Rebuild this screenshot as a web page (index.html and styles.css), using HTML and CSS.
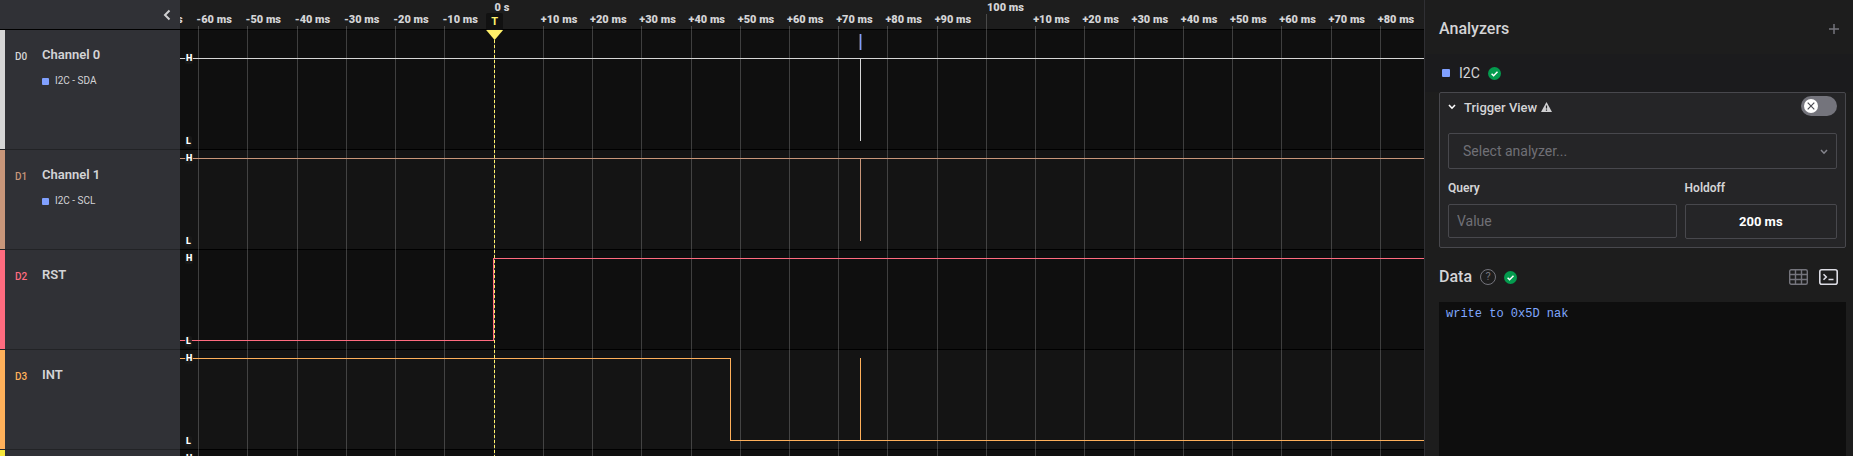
FILE: index.html
```html
<!DOCTYPE html>
<html lang="en">
<head>
<meta charset="utf-8">
<title>Logic Analyzer</title>
<link rel="stylesheet" href="styles.css">
</head>
<body>
<div class="app">
  <aside class="channels">
    <header class="channels-head">
      <button class="icon-btn" type="button" aria-label="Collapse channels">
        <svg width="8" height="12" viewBox="0 0 8 12"><path d="M6.500 1.500 2 6l4.500 4.500" fill="none" stroke="currentColor" stroke-width="2"/></svg>
      </button>
    </header>
    <section class="channel tall white">
      <span class="channel-id">D0</span>
      <div><h2>Channel 0</h2><p class="tag"><i class="swatch"></i>I2C - SDA</p></div>
    </section>
    <section class="channel tan">
      <span class="channel-id">D1</span>
      <div><h2>Channel 1</h2><p class="tag"><i class="swatch"></i>I2C - SCL</p></div>
    </section>
    <section class="channel red">
      <span class="channel-id">D2</span>
      <div><h2>RST</h2></div>
    </section>
    <section class="channel orange">
      <span class="channel-id">D3</span>
      <div><h2>INT</h2></div>
    </section>
    <section class="channel yellow"></section>
  </aside>

  <main class="plot">
    <div class="ruler-bg"></div>
    <div class="lane tall"></div>
    <div class="lane"></div>
    <div class="lane"></div>
    <div class="lane"></div>
    <div class="lane"></div>
    <ol class="timeline">
      <li>-70 ms</li><li>-60 ms</li><li>-50 ms</li><li>-40 ms</li><li>-30 ms</li><li>-20 ms</li><li>-10 ms</li>
      <li class="major">0 s</li>
      <li>+10 ms</li><li>+20 ms</li><li>+30 ms</li><li>+40 ms</li><li>+50 ms</li><li>+60 ms</li><li>+70 ms</li><li>+80 ms</li><li>+90 ms</li>
      <li class="major">100 ms</li>
      <li>+10 ms</li><li>+20 ms</li><li>+30 ms</li><li>+40 ms</li><li>+50 ms</li><li>+60 ms</li><li>+70 ms</li><li>+80 ms</li>
    </ol>
    <div class="waves">
      <div class="wave tall white">
        <svg class="trace"><line x1="0" y1="28.500" x2="100%" y2="28.500"/><line x1="54.700%" y1="28" x2="54.700%" y2="111"/><line class="frame" x1="54.700%" y1="4" x2="54.700%" y2="20"/><line class="frame-core" x1="54.700%" y1="4" x2="54.700%" y2="20"/></svg>
        <b class="level">H</b><b class="level">L</b>
      </div>
      <div class="wave tan">
        <svg class="trace"><line x1="0" y1="8.500" x2="100%" y2="8.500"/><line x1="54.700%" y1="8" x2="54.700%" y2="91"/></svg>
        <b class="level">H</b><b class="level">L</b>
      </div>
      <div class="wave red">
        <svg class="trace"><line x1="0" y1="90.500" x2="25.200%" y2="90.500"/><line x1="25.200%" y1="8" x2="25.200%" y2="91"/><line x1="25.200%" y1="8.500" x2="100%" y2="8.500"/></svg>
        <b class="level">H</b><b class="level">L</b>
      </div>
      <div class="wave orange">
        <svg class="trace"><line x1="0" y1="8.500" x2="44.250%" y2="8.500"/><line x1="44.250%" y1="8" x2="44.250%" y2="91"/><line x1="44.250%" y1="90.500" x2="100%" y2="90.500"/><line x1="54.700%" y1="8" x2="54.700%" y2="91"/></svg>
        <b class="level">H</b><b class="level">L</b>
      </div>
      <div class="wave yellow">
        <b class="level">H</b>
      </div>
    </div>
    <div class="trigger"><b>T</b><i class="arrow"></i></div>
  </main>

  <aside class="panel">
    <header class="panel-head">
      <h1>Analyzers</h1>
      <button class="icon-btn dim" type="button" aria-label="Add analyzer">
        <svg width="10" height="10" viewBox="0 0 10 10"><path d="M5 0v10M0 5h10" stroke="currentColor" stroke-width="1.500"/></svg>
      </button>
    </header>
    <div class="analyzer">
      <i class="swatch"></i><span>I2C</span>
      <svg width="13" height="13" viewBox="0 0 13 13"><circle cx="6.500" cy="6.500" r="6.500" fill="#049b4e"/><path d="M3.600 6.700 5.600 8.700 9.500 4.700" fill="none" stroke="#fff" stroke-width="1.500"/></svg>
    </div>
    <section class="card">
      <header class="card-head">
        <button class="icon-btn fold" type="button" aria-label="Collapse Trigger View">
          <svg width="8" height="6" viewBox="0 0 8 6"><path d="M1 1l3 3.200L7 1" fill="none" stroke="currentColor" stroke-width="1.600"/></svg>
        </button>
        <h3>Trigger View</h3>
        <svg class="warn" width="11" height="10" viewBox="0 0 11 10"><path d="M5.500 0 11 10H0Z" fill="#cfcfd1"/><path d="M5.500 3.400v3.200M5.500 7.500v1.200" stroke="#252527" stroke-width="1.200"/></svg>
        <label class="toggle">
          <input type="checkbox" aria-label="Enable Trigger View">
          <svg width="14" height="14" viewBox="0 0 14 14"><circle cx="7" cy="7" r="7" fill="#fff"/><path d="M3.700 3.700l6.600 6.600M10.300 3.700l-6.600 6.600" stroke="#4c4c54" stroke-width="1.200"/></svg>
        </label>
      </header>
      <div class="select-box">
        <select aria-label="Analyzer"><option>Select analyzer...</option></select>
        <svg width="8" height="6" viewBox="0 0 8 6"><path d="M1 1l3 3.200L7 1" fill="none" stroke="currentColor" stroke-width="1.500"/></svg>
      </div>
      <div class="fields">
        <div class="field"><label for="query">Query</label><input id="query" type="text" placeholder="Value"></div>
        <div class="field"><label for="holdoff">Holdoff</label><input id="holdoff" class="holdoff" type="text" value="200 ms"></div>
      </div>
    </section>
    <header class="data-head">
      <h1>Data</h1>
      <button class="help" type="button" aria-label="Help">?</button>
      <svg width="13" height="13" viewBox="0 0 13 13"><circle cx="6.500" cy="6.500" r="6.500" fill="#049b4e"/><path d="M3.600 6.700 5.600 8.700 9.500 4.700" fill="none" stroke="#fff" stroke-width="1.500"/></svg>
      <div class="views">
        <button class="icon-btn dim" type="button" aria-label="Table view">
          <svg width="19" height="16" viewBox="0 0 19 16" fill="none" stroke="currentColor" stroke-width="1.400"><rect x=".7" y=".7" width="17.600" height="14.600" rx="1.500"/><path d="M6.500 1v14M12.500 1v14M1 5.500h17M1 10.500h17"/></svg>
        </button>
        <button class="icon-btn bright" type="button" aria-label="Terminal view">
          <svg width="19" height="16" viewBox="0 0 19 16" fill="none" stroke="currentColor" stroke-width="1.600"><rect x=".8" y=".8" width="17.400" height="14.400" rx="2"/><path d="M4.500 5.200 7.300 8l-2.800 2.800M9.500 10.500h5"/></svg>
        </button>
      </div>
    </header>
    <pre class="terminal">write to 0x5D nak</pre>
  </aside>
</div>
</body>
</html>
```
FILE: styles.css
```css
* { box-sizing: border-box; margin: 0; padding: 0; }

body {
  background: #1d1d1d;
  color: #d4d4d6;
  font-family: Roboto, sans-serif;
  overflow: hidden;
}

.app { display: flex; height: 100vh; overflow: hidden; }

button { font: inherit; cursor: pointer; }
.icon-btn { display: flex; background: none; border: 0; color: #cfcfd1; }
.dim { color: #74747c; }
.bright { color: #dcdce4; }

.white { --c: #d6d6d6; }
.tan { --c: #c8967a; }
.red { --c: #ff6b7f; }
.orange { --c: #ffb05a; }
.yellow { --c: #f7e83c; }

/* Channel list */
.channels { flex: 0 0 180px; background: #303136; }
.channels-head {
  display: flex;
  justify-content: flex-end;
  align-items: center;
  height: 30px;
  padding: 0 9px;
  border-bottom: 1px solid #000;
}
.channel {
  display: flex;
  height: 100px;
  padding: 16px 10px 0;
  border-bottom: 1px solid #222326;
  background: linear-gradient(var(--c), var(--c)) no-repeat left / 5px 100%;
}
.channel.tall, .wave.tall, .lane.tall { height: 120px; }
.channel-id {
  width: 32px;
  padding: 4px 0 0 5px;
  color: var(--c);
  font-size: 10px;
  font-weight: 500;
  line-height: 14px;
}
.channel h2 { font-size: 13px; font-weight: 600; line-height: 18px; }
.tag {
  display: flex;
  align-items: center;
  gap: 6px;
  margin-top: 10px;
  font-size: 10px;
  line-height: 14px;
}
.swatch { width: 7px; height: 7px; border-radius: 1px; background: #80a0ff; }

/* Waveform area */
.plot { position: relative; flex: 1; min-width: 0; overflow: hidden; }
.ruler-bg { height: 30px; background: #1d1d1d; border-bottom: 1px solid #000; }
.lane { height: 100px; background: #141414; border-bottom: 1px solid #000; }
.lane:nth-child(even) { background: #0f0f0f; }

.timeline {
  position: absolute;
  inset: 0 -5px 0 -31px;
  display: grid;
  grid-template-columns: repeat(26, 1fr);
  list-style: none;
  white-space: nowrap;
  font-size: 11px;
  font-weight: 900;
  line-height: 14px;
}
.timeline li {
  padding-top: 13px;
  text-indent: -2px;
  background: linear-gradient(#fff3, #fff3) no-repeat 0 26px / 1px 100%;
}
.timeline .major {
  padding-top: 1px;
  text-indent: 1px;
  background-position: 0 14px;
}

.waves { position: absolute; inset: 30px 0 0; }
.wave {
  position: relative;
  display: flex;
  flex-direction: column;
  justify-content: space-between;
  align-items: flex-start;
  height: 100px;
  padding: 3px 5px;
}
.wave.tall { padding-top: 23px; }
.trace {
  position: absolute;
  inset: 0;
  width: 100%;
  height: 100%;
  stroke: var(--c);
  shape-rendering: crispEdges;
}
.frame { stroke: #4a4a58; stroke-width: 3px; }
.frame-core { stroke: #7c9cff; }
.level {
  position: relative;
  padding: 0 1px;
  border-radius: 2px;
  background: #1a1a1acc;
  color: #fff;
  font-size: 9px;
  font-weight: 900;
  line-height: 11px;
}

.trigger {
  position: absolute;
  top: 13px;
  bottom: 0;
  left: 25.250%;
  width: 17px;
  margin-left: -8px;
  background: repeating-linear-gradient(#fff06a 0 3px, transparent 3px 5px) no-repeat 8px 17px / 1px 100%;
}
.trigger b {
  display: block;
  border-radius: 2px;
  background: #111;
  color: #fff06a;
  font-size: 11px;
  line-height: 17px;
  text-align: center;
}
.arrow {
  display: block;
  height: 10px;
  background: #fff06a;
  clip-path: polygon(0 0, 100% 0, 50% 100%);
}

/* Analyzer panel */
.panel {
  display: flex;
  flex-direction: column;
  flex: 0 0 429px;
  padding: 0 7px 0 14px;
  border-left: 1px solid #303034;
  background: #1d1d1d;
}
h1 { font-size: 16px; font-weight: 500; line-height: 20px; }
.panel-head {
  display: flex;
  justify-content: space-between;
  align-items: center;
  padding: 19px 7px 15px 0;
}
.analyzer {
  display: flex;
  align-items: center;
  gap: 8px;
  height: 38px;
  margin: 0 -7px 0 -14px;
  padding: 0 17px;
  background: #1b1b1d;
  font-size: 14px;
}
.analyzer .swatch { width: 8px; height: 8px; margin-right: 1px; }
.card {
  padding: 3px 8px 8px;
  border: 1px solid #48484d;
  border-radius: 2px;
  background: #252527;
}
.card-head { display: flex; align-items: center; height: 22px; margin-bottom: 15px; }
.fold { width: 16px; color: #fff; }
.card-head h3 { font-size: 13px; font-weight: 500; }
.warn { margin-left: 4px; }
.toggle {
  display: flex;
  align-items: center;
  width: 36px;
  height: 20px;
  margin: 0 0 2px auto;
  padding: 0 3px;
  border-radius: 10px;
  background: #74747c;
}
.toggle input { appearance: none; width: 0; height: 0; }
.select-box { position: relative; color: #85858d; }
.select-box svg { position: absolute; right: 9px; top: 16px; }
select, input[type="text"] {
  display: block;
  width: 100%;
  border: 1px solid #48484d;
  border-radius: 2px;
  background: #252527;
  color: #707076;
  font: 14px Roboto, sans-serif;
}
select { appearance: none; height: 36px; padding: 0 14px; }
.fields { display: grid; grid-template-columns: 3fr 2fr; gap: 8px; margin-top: 11px; }
.field label { display: block; margin-bottom: 8px; font-size: 12px; font-weight: 600; line-height: 16px; }
input[type="text"] { height: 34px; padding: 0 8px; }
input::placeholder { color: #707076; }
input.holdoff[type="text"] {
  height: 35px;
  color: #fff;
  font-size: 13px;
  font-weight: 700;
  text-align: center;
}
.data-head { display: flex; align-items: center; gap: 8px; padding: 19px 8px 15px 0; }
.help {
  width: 16px;
  height: 16px;
  border: 1px solid #74747c;
  border-radius: 50%;
  background: none;
  color: #74747c;
  font-size: 11px;
  line-height: 14px;
}
.views { display: flex; gap: 11px; margin-left: auto; }
.terminal {
  flex: 1;
  padding: 4px 7px;
  background: #0e0e0e;
  color: #80a8ff;
  font: 12px/16px "Courier New", "Liberation Mono", monospace;
}
```
